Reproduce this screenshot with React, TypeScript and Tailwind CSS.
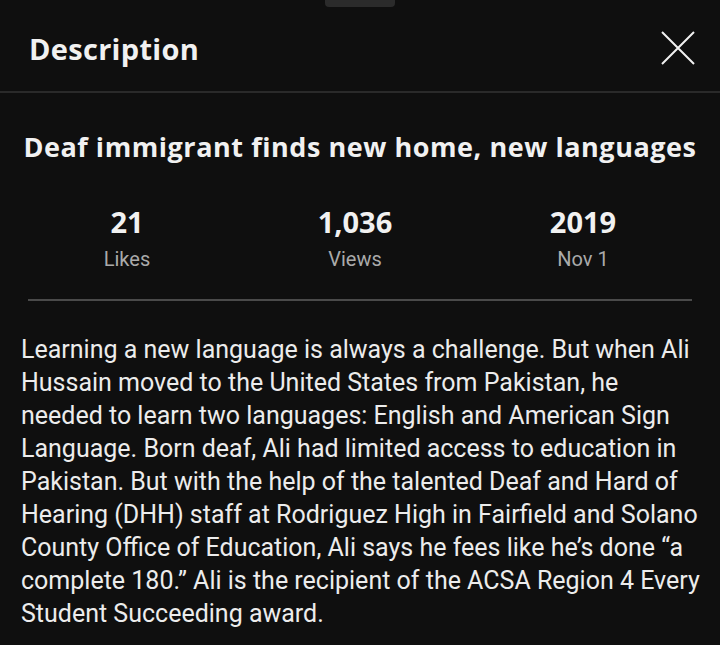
import React from "react";

const head = { fontFamily: '"Open Sans", "DejaVu Sans", sans-serif' };
const body = { fontFamily: 'Roboto, "Liberation Sans", sans-serif' };

function Stat({ value, label }: { value: string; label: string }) {
  return (
    <div className="flex flex-col items-center">
      <div className="text-[29px] font-bold leading-[34px] text-[#f1f1f1]" style={head}>
        {value}
      </div>
      <div className="mt-[7px] text-[20px] leading-[26px] text-[#aaaaaa]" style={body}>
        {label}
      </div>
    </div>
  );
}

export default function App() {
  return (
    <div className="w-[720px] h-[645px] bg-[#0f0f0f] overflow-hidden relative">
      <div className="absolute left-[325px] top-0 w-[70px] h-[7px] rounded-b-[4px] bg-[#2b2b2b]" />
      <div className="flex items-center justify-between h-[91px] pl-[29px] pr-[24px] pt-[6px]">
        <h1 className="text-[29px] font-bold text-[#f1f1f1] tracking-[0.3px]" style={head}>
          Description
        </h1>
        <svg width="36" height="36" viewBox="0 0 36 36" className="mt-[-2px]">
          <path d="M2 2 L34 34 M34 2 L2 34" stroke="#f1f1f1" strokeWidth="2" fill="none" />
        </svg>
      </div>
      <div className="h-[2px] bg-[#2a2a2a]" />
      <h2
        className="mt-[38px] text-center text-[27px] font-bold leading-[32px] text-[#f1f1f1] tracking-[0.55px] whitespace-nowrap"
        style={head}
      >
        Deaf immigrant finds new home, new languages
      </h2>
      <div className="mt-[42px] ml-[13px] w-[684px] grid grid-cols-3">
        <Stat value="21" label="Likes" />
        <Stat value="1,036" label="Views" />
        <Stat value="2019" label="Nov 1" />
      </div>
      <div className="mt-[27px] mx-[28px] h-[2px] bg-[#4a4a4a]" />
      <p className="mt-[32px] pl-[21px] pr-[19px] text-[25px] leading-[33px] text-[#ececec]" style={body}>
        Learning a new language is always a challenge. But when Ali Hussain moved to the United States from
        Pakistan, he needed to learn two languages: English and American Sign Language. Born deaf, Ali had
        limited access to education in Pakistan. But with the help of the talented Deaf and Hard of Hearing
        (DHH) staff at Rodriguez High in Fairfield and Solano County Office of Education, Ali says he fees
        like he’s done “a complete 180.” Ali is the recipient of the ACSA Region 4 Every Student Succeeding
        award.
      </p>
    </div>
  );
}
